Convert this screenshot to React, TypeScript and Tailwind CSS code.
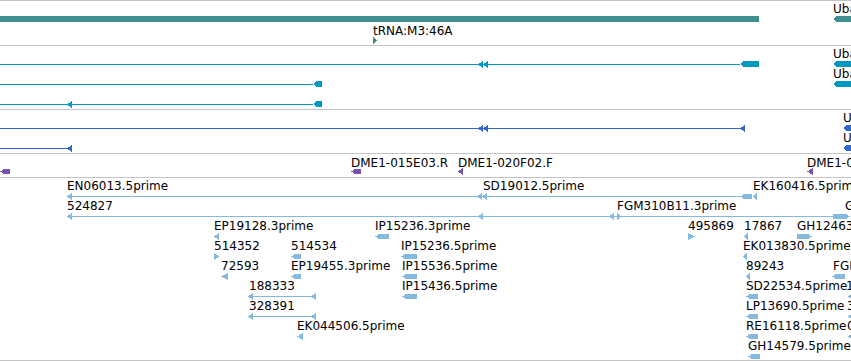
import React from 'react';

type Shape =
  | { t: 'line'; x1: number; x2: number; y: number }
  | { t: 'box'; x1: number; x2: number; y: number; h: number; taper?: 'l' | 'r' }
  | { t: 'tri'; x: number; y: number; dir: 'l' | 'r'; w: number };

type Label = { x: number; cap: number; text: string };

type Track = { top: number; cls: string; color: string; shapes: Shape[]; labels: Label[] };

// all coordinates are page pixels; tracks shift them by their own top
const line = (x1: number, x2: number, y: number): Shape => ({ t: 'line', x1, x2, y });
const box = (x1: number, x2: number, y: number, h: number, taper?: 'l' | 'r'): Shape => ({ t: 'box', x1, x2, y, h, taper });
const tri = (x: number, y: number, dir: 'l' | 'r' = 'l', w = 5): Shape => ({ t: 'tri', x, y, dir, w });
const lab = (x: number, cap: number, text: string): Label => ({ x, cap, text });

// rows of the EST track
const r = (k: number) => 196 + 20 * k;
const c = (k: number) => 181 + 20 * k;

const TRACKS: Track[] = [
  {
    top: 1,
    cls: 'h-[45px]',
    color: '#418e90',
    shapes: [box(0, 759, 16, 6), box(833, 860, 16, 6, 'l'), tri(373, 40, 'r', 4)],
    labels: [lab(833, 4, 'Uba1'), lab(373, 26, 'tRNA:M3:46A')],
  },
  {
    top: 46,
    cls: 'h-[64px]',
    color: '#0098c0',
    shapes: [
      line(0, 740, 64), box(740, 759, 61, 6, 'l'), tri(478, 64), tri(483, 64),
      line(0, 313, 84), box(313, 322, 81, 6, 'l'),
      line(0, 313, 104), box(313, 322, 101, 6, 'l'), tri(67, 104),
      box(833, 860, 61, 6, 'l'), box(833, 860, 81, 6, 'l'),
    ],
    labels: [lab(833, 49, 'Uba1-RA'), lab(833, 69, 'Uba1-RB')],
  },
  {
    top: 110,
    cls: 'h-[44px]',
    color: '#3366cc',
    shapes: [
      line(0, 745, 128), tri(478, 128), tri(483, 128), tri(740, 128),
      line(0, 72, 148), tri(67, 148),
      box(843, 860, 125, 6, 'l'), box(843, 860, 145, 6, 'l'),
    ],
    labels: [lab(843, 113, 'Uba1'), lab(843, 133, 'Uba1')],
  },
  {
    top: 154,
    cls: 'h-[24px]',
    color: '#7553ad',
    shapes: [box(0, 10, 169, 5, 'l'), box(351, 361, 169, 5, 'l'), tri(458, 171), tri(807, 171, 'l', 6)],
    labels: [lab(351, 158, 'DME1-015E03.R'), lab(458, 158, 'DME1-020F02.F'), lab(807, 158, 'DME1-022A11.R')],
  },
  {
    top: 178,
    cls: 'h-[183px]',
    color: '#84b9e0',
    shapes: [
      // row 0
      line(67, 740, r(0)), tri(67, r(0)), tri(477, r(0)), tri(482, r(0)),
      box(740, 752, r(0) - 2, 5, 'l'), tri(753, r(0), 'l', 4),
      // row 1
      line(67, 833, r(1)), tri(67, r(1)), tri(478, r(1)), tri(609, r(1)), tri(617, r(1), 'r', 4),
      box(833, 850, r(1) - 2, 5, 'r'),
      // row 2
      tri(214, r(2)), box(375, 389, r(2) - 2, 5, 'l'), tri(688, r(2), 'r', 7), tri(744, r(2), 'l', 4),
      box(797, 812, r(2) - 2, 5, 'r'),
      // row 3
      tri(214, r(3), 'r'), box(291, 301, r(3) - 2, 5, 'l'), box(401, 417, r(3) - 2, 5, 'l'), tri(743, r(3), 'l', 4),
      // row 4
      tri(221, r(4), 'l', 7), box(291, 301, r(4) - 2, 5, 'l'), box(402, 417, r(4) - 2, 5, 'l'),
      tri(746, r(4), 'l', 4), box(832, 845, r(4) - 2, 5, 'l'),
      // row 5
      line(248, 316, r(5)), tri(248, r(5)), tri(311, r(5)), box(402, 417, r(5) - 2, 5, 'l'),
      box(746, 758, r(5) - 2, 5, 'l'), tri(848, r(5)),
      // row 6
      line(248, 316, r(6)), tri(248, r(6)), tri(311, r(6)), box(746, 758, r(6) - 2, 5, 'l'), tri(848, r(6)),
      // row 7
      tri(297, r(7), 'l', 6), box(746, 758, r(7) - 2, 5, 'l'), tri(848, r(7)),
      // row 8
      box(748, 760, r(8) - 2, 5, 'l'),
    ],
    labels: [
      lab(67, c(0), 'EN06013.5prime'), lab(483, c(0), 'SD19012.5prime'), lab(753, c(0), 'EK160416.5prime'),
      lab(67, c(1), '524827'), lab(617, c(1), 'FGM310B11.3prime'), lab(845, c(1), 'GH01267'),
      lab(214, c(2), 'EP19128.3prime'), lab(375, c(2), 'IP15236.3prime'), lab(688, c(2), '495869'),
      lab(744, c(2), '17867'), lab(797, c(2), 'GH12463.5prime'),
      lab(214, c(3), '514352'), lab(291, c(3), '514534'), lab(401, c(3), 'IP15236.5prime'), lab(743, c(3), 'EK013830.5prime'),
      lab(221, c(4), '72593'), lab(291, c(4), 'EP19455.3prime'), lab(402, c(4), 'IP15536.5prime'),
      lab(746, c(4), '89243'), lab(833, c(4), 'FGM310B11'),
      lab(249, c(5), '188333'), lab(402, c(5), 'IP15436.5prime'), lab(746, c(5), 'SD22534.5prime'), lab(846, c(5), '1'),
      lab(249, c(6), '328391'), lab(746, c(6), 'LP13690.5prime'), lab(847, c(6), '3'),
      lab(297, c(7), 'EK044506.5prime'), lab(746, c(7), 'RE16118.5prime'), lab(847, c(7), '0'),
      lab(748, c(8), 'GH14579.5prime'),
    ],
  },
];

const ShapeEl: React.FC<{ s: Shape }> = ({ s }) => {
  if (s.t === 'line') return <rect x={s.x1} y={s.y} width={s.x2 - s.x1} height={1} />;
  if (s.t === 'tri') {
    const tip = s.dir === 'l' ? s.x : s.x + s.w;
    const base = s.dir === 'l' ? s.x + s.w : s.x;
    return <polygon points={`${tip},${s.y + 0.5} ${base},${s.y - 3} ${base},${s.y + 4}`} />;
  }
  const { x1, x2, y, h, taper } = s;
  const k = Math.min(4, (x2 - x1) / 2);
  if (taper === 'l')
    return <polygon points={`${x1},${y + h / 2} ${x1 + k},${y} ${x2},${y} ${x2},${y + h} ${x1 + k},${y + h}`} />;
  if (taper === 'r')
    return <polygon points={`${x1},${y} ${x2 - k},${y} ${x2},${y + h / 2} ${x2 - k},${y + h} ${x1},${y + h}`} />;
  return <rect x={x1} y={y} width={x2 - x1} height={h} />;
};

const TrackRow: React.FC<{ track: Track }> = ({ track }) => (
  <div className={`relative w-full overflow-hidden border-b border-[#c4c4c4] ${track.cls}`}>
    <svg className="absolute inset-0 h-full w-full" shapeRendering="crispEdges">
      <g transform={`translate(0,${-track.top})`} fill={track.color}>
        {track.shapes.map((s, i) => (
          <ShapeEl key={i} s={s} />
        ))}
      </g>
    </svg>
    {track.labels.map((l, i) => (
      <span key={i} className="absolute whitespace-nowrap" style={{ left: l.x, top: l.cap - 2 - track.top }}>
        {l.text}
      </span>
    ))}
  </div>
);

export default function App() {
  return (
    <div className="w-[851px] h-[361px] overflow-hidden bg-white border-t border-[#c4c4c4] font-['DejaVu_Sans',sans-serif] text-[12px] leading-[14px] text-black">
      {TRACKS.map((t, i) => (
        <TrackRow key={i} track={t} />
      ))}
    </div>
  );
}
